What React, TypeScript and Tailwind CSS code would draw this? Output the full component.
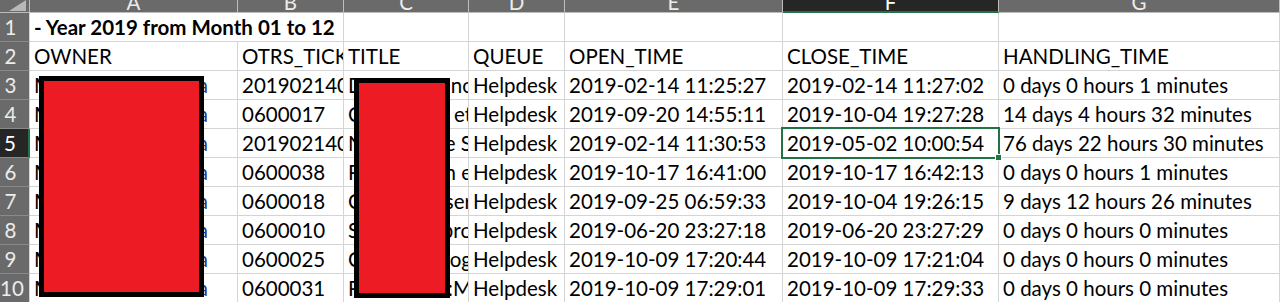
import React from 'react';

const cols = ['A', 'B', 'C', 'D', 'E', 'F', 'G'];

type Row = {
  ticket: string;
  titleHead: string;
  titleTail: string;
  open: string;
  close: string;
  handling: string;
};

const rows: Row[] = [
  { ticket: '2019021400012', titleHead: 'D', titleTail: 'nc', open: '2019-02-14 11:25:27', close: '2019-02-14 11:27:02', handling: '0 days 0 hours 1 minutes' },
  { ticket: '0600017', titleHead: 'C', titleTail: 'et', open: '2019-09-20 14:55:11', close: '2019-10-04 19:27:28', handling: '14 days 4 hours 32 minutes' },
  { ticket: '2019021400021', titleHead: 'N', titleTail: 'e S', open: '2019-02-14 11:30:53', close: '2019-05-02 10:00:54', handling: '76 days 22 hours 30 minutes' },
  { ticket: '0600038', titleHead: 'P', titleTail: 'n e', open: '2019-10-17 16:41:00', close: '2019-10-17 16:42:13', handling: '0 days 0 hours 1 minutes' },
  { ticket: '0600018', titleHead: 'C', titleTail: 'ser', open: '2019-09-25 06:59:33', close: '2019-10-04 19:26:15', handling: '9 days 12 hours 26 minutes' },
  { ticket: '0600010', titleHead: 'S', titleTail: 'pro', open: '2019-06-20 23:27:18', close: '2019-06-20 23:27:29', handling: '0 days 0 hours 0 minutes' },
  { ticket: '0600025', titleHead: 'C', titleTail: 'og', open: '2019-10-09 17:20:44', close: '2019-10-09 17:21:04', handling: '0 days 0 hours 0 minutes' },
  { ticket: '0600031', titleHead: 'P', titleTail: '::M', open: '2019-10-09 17:29:01', close: '2019-10-09 17:29:33', handling: '0 days 0 hours 0 minutes' },
];

const cell = 'h-[29px] border-r border-b border-[#d4d4d4] bg-white overflow-hidden whitespace-nowrap pl-[4px] leading-[28px]';

function RowHead({ n, active }: { n: number; active?: boolean }) {
  return (
    <div
      className={
        active
          ? 'h-[29px] border-b border-[#8a8a8a] border-r-2 border-r-[#217346] bg-[#262626] text-white leading-[28px] pr-[8px] text-center'
          : 'h-[29px] border-b border-[#8a8a8a] border-r border-r-[#d4d4d4] bg-[#6a6a6a] text-[#ececec] leading-[28px] pr-[8px] text-center'
      }
    >
      {n}
    </div>
  );
}

export default function App() {
  return (
    <div
      className="relative w-[1281px] h-[302px] overflow-hidden bg-white text-[20.5px] text-black"
      style={{ fontFamily: 'Lato, "Open Sans", sans-serif' }}
    >
      <div className="grid grid-cols-[30px_208px_106px_125px_96px_218px_216px_281px_1fr]">
        {/* column headers */}
        <div className="h-[13px] bg-[#6a6a6a] border-r border-b border-[#bdbdbd] overflow-hidden">
          <svg width="29" height="12" viewBox="0 0 29 12">
            <polygon points="26,0 26,11 9,11" fill="#b8b8b8" />
          </svg>
        </div>
        {cols.map((c) => (
          <div
            key={c}
            className={
              c === 'F'
                ? 'h-[13px] bg-[#262626] border-r border-r-[#bdbdbd] border-b-2 border-b-[#217346] overflow-hidden text-center text-white leading-[20px]'
                : 'h-[13px] bg-[#6a6a6a] border-r border-b border-[#bdbdbd] overflow-hidden text-center text-[#ececec] leading-[20px]'
            }
          >
            <div className="-mt-[8px]">{c}</div>
          </div>
        ))}
        <div className="h-[13px] bg-white" />

        {/* row 1 */}
        <RowHead n={1} />
        <div className={`${cell} col-span-2 font-bold`}>- Year 2019 from Month 01 to 12</div>
        <div className={cell} />
        <div className={cell} />
        <div className={cell} />
        <div className={cell} />
        <div className={cell} />
        <div className="h-[29px] bg-white" />

        {/* row 2 */}
        <RowHead n={2} />
        <div className={cell}>OWNER</div>
        <div className={cell}>OTRS_TICKET_ID</div>
        <div className={cell}>TITLE</div>
        <div className={cell}>QUEUE</div>
        <div className={cell}>OPEN_TIME</div>
        <div className={cell}>CLOSE_TIME</div>
        <div className={cell}>HANDLING_TIME</div>
        <div className="h-[29px] bg-white" />

        {rows.map((r, i) => {
          const n = i + 3;
          const active = n === 5;
          return (
            <React.Fragment key={n}>
              <RowHead n={n} active={active} />
              <div className={cell}>
                <div className="flex w-[174px] justify-between">
                  <span>M</span>
                  <span className="text-[#1f3a8a]">a</span>
                </div>
              </div>
              <div className={cell}>{r.ticket}</div>
              <div className={`${cell} flex justify-between`}>
                <span>{r.titleHead}</span>
                <span className="-mr-[4px]">{r.titleTail}</span>
              </div>
              <div className={cell}>Helpdesk</div>
              <div className={cell}>{r.open}</div>
              <div className={`${cell} ${active ? 'relative overflow-visible' : ''}`}>
                {r.close}
                {active && (
                  <div className="absolute -left-[2px] -top-[2px] -right-[2px] -bottom-[2px] border-2 border-[#217346]">
                    <div className="absolute -right-[4px] -bottom-[4px] w-[7px] h-[7px] bg-[#217346] border border-white" />
                  </div>
                )}
              </div>
              <div className={cell}>{r.handling}</div>
              <div className="h-[29px] bg-white" />
            </React.Fragment>
          );
        })}
      </div>

      {/* redaction boxes */}
      <div className="absolute left-[39px] top-[76px] w-[165px] h-[221px] bg-[#ed1c24] border-[5px] border-black" />
      <div className="absolute left-[354px] top-[78px] w-[96px] h-[220px] bg-[#ed1c24] border-[5px] border-black" />
    </div>
  );
}
